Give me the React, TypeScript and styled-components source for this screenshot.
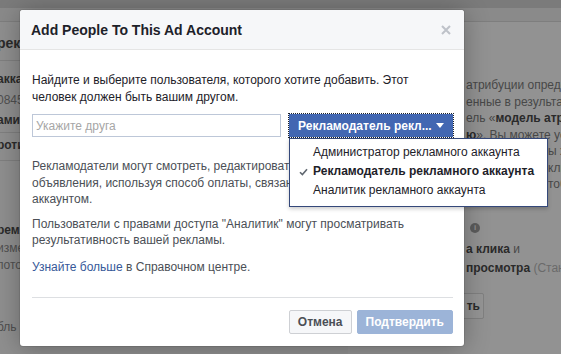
import styled, { createGlobalStyle } from "styled-components";

const GlobalStyle = createGlobalStyle`
  html, body {
    margin: 0;
    padding: 0;
  }
  body {
    font-family: "Liberation Sans", Arial, sans-serif;
    font-size: 12px;
    color: #1d2129;
  }
`;

const Screen = styled.div`
  position: relative;
  width: 561px;
  height: 354px;
  overflow: hidden;
  background: #929292;
`;

const TopBar = styled.div`
  height: 8px;
  background: #7b7b7b;
`;

const SubBar = styled.div`
  height: 13px;
  background: #8a8a8a;
  border-bottom: 1px solid #7e7e7e;
`;

const Page = styled.div`
  display: flex;
  height: 332px;
`;

const SideCol = styled.div`
  width: 348px;
  flex: none;
  overflow: hidden;
  display: flex;
  flex-direction: column;
  background: #8f8f8f;
`;

const SideLine = styled.div<{ $mt: number; $bold?: boolean; $big?: boolean }>`
  margin-top: ${(p) => p.$mt}px;
  margin-left: -3px;
  height: 16px;
  line-height: 16px;
  white-space: nowrap;
  font-size: ${(p) => (p.$big ? 14 : 12)}px;
  font-weight: ${(p) => (p.$bold ? "bold" : "normal")};
  color: ${(p) => (p.$bold ? "#2b2b2b" : "#4f4f4f")};
`;

const Rule = styled.div<{ $mt: number }>`
  margin-top: ${(p) => p.$mt}px;
  height: 1px;
  background: #7f7f7f;
`;

const MainCol = styled.div`
  flex: 1;
  overflow: hidden;
  padding-left: 118px;
  display: flex;
  flex-direction: column;
  color: #484848;
`;

const Copy = styled.div`
  margin-top: 55px;
  line-height: 16.5px;
  white-space: nowrap;
  b {
    color: #2a2a2a;
  }
`;

const CopyLine = styled.div<{ $indent?: number }>`
  padding-left: ${(p) => p.$indent ?? 0}px;
`;

const InfoDot = styled.div`
  margin: 30px 0 0 4px;
  width: 10px;
  height: 10px;
  border-radius: 50%;
  background: #5c5c5c;
  color: #929292;
  font-size: 8px;
  font-weight: bold;
  line-height: 10px;
  text-align: center;
`;

const Metrics = styled.div`
  margin-top: 7px;
  line-height: 19px;
  white-space: nowrap;
  b {
    color: #2a2a2a;
  }
  span {
    color: #6a6a6a;
  }
`;

const GhostButton = styled.div`
  margin: 15px 0 0 -40px;
  width: 58px;
  height: 26px;
  box-sizing: border-box;
  border: 1px solid #808080;
  border-radius: 2px;
  background: #959595;
  display: flex;
  align-items: center;
  justify-content: flex-end;
  padding-right: 3px;
  font-weight: bold;
  color: #2a2a2a;
`;

const Modal = styled.div`
  position: absolute;
  left: 20px;
  top: 10px;
  width: 444px;
  background: #fff;
  border-radius: 3px;
  box-shadow: 0 2px 26px rgba(0, 0, 0, 0.3), 0 0 0 1px rgba(0, 0, 0, 0.08);
`;

const Header = styled.div`
  height: 39px;
  border-bottom: 1px solid #e5e5e5;
  background: #f6f7f9;
  border-radius: 3px 3px 0 0;
  display: flex;
  align-items: center;
  justify-content: space-between;
  padding: 0 13px 0 11px;
`;

const Title = styled.div`
  font-size: 14px;
  font-weight: bold;
  color: #1d2129;
`;

const Body = styled.div`
  padding: 22px 11px 0 12px;
`;

const Text = styled.p<{ $mt?: number }>`
  margin: ${(p) => p.$mt ?? 0}px 0 0;
  line-height: 16.5px;
  color: #4b4f56;
  a {
    color: #365899;
    text-decoration: none;
  }
`;

const Lead = styled(Text)`
  color: #1d2129;
`;

const PickRow = styled.div`
  margin-top: 9px;
  display: flex;
  gap: 8px;
`;

const FriendInput = styled.input`
  width: 249px;
  height: 23px;
  box-sizing: border-box;
  border: 1px solid #bdc7d8;
  padding: 0 3px;
  font: inherit;
  color: #1d2129;
  outline: none;
  &::placeholder {
    color: #a6a6a6;
  }
`;

const RoleBox = styled.div`
  position: relative;
`;

const RoleButton = styled.button`
  width: 164px;
  height: 23px;
  box-sizing: border-box;
  border: 1px solid #4267b2;
  background: #4267b2;
  color: #fff;
  font: bold 12px "Liberation Sans", Arial, sans-serif;
  padding: 0 8px;
  display: flex;
  align-items: center;
  justify-content: space-between;
  outline: 1px dotted #1d2129;
  outline-offset: 0;
`;

const Caret = styled.span`
  width: 0;
  height: 0;
  border-left: 4px solid transparent;
  border-right: 4px solid transparent;
  border-top: 5px solid #fff;
`;

const Menu = styled.div`
  position: absolute;
  top: calc(100% + 1px);
  left: 0;
  width: 259px;
  box-sizing: border-box;
  padding: 4px 0 6px;
  background: #fff;
  border: 1px solid #34487a;
  box-shadow: 0 2px 4px rgba(0, 0, 0, 0.2);
  z-index: 2;
`;

const MenuItem = styled.div<{ $selected?: boolean }>`
  position: relative;
  height: 19px;
  line-height: 19px;
  padding-left: 23px;
  white-space: nowrap;
  color: #1d2129;
  font-weight: ${(p) => (p.$selected ? "bold" : "normal")};
`;

const Check = styled.svg`
  position: absolute;
  left: 9px;
  top: 6px;
`;

const Footer = styled.div`
  margin: 22px 11px 0 12px;
  border-top: 1px solid #dddfe2;
  padding: 12px 0;
  display: flex;
  justify-content: flex-end;
  gap: 5px;
`;

const Button = styled.button<{ $primary?: boolean }>`
  height: 24px;
  box-sizing: border-box;
  padding: 0 8px;
  border-radius: 2px;
  font: bold 12px "Liberation Sans", Arial, sans-serif;
  border: 1px solid ${(p) => (p.$primary ? "#9cb4d8" : "#ced0d4")};
  background: ${(p) => (p.$primary ? "#9cb4d8" : "#f6f7f9")};
  color: ${(p) => (p.$primary ? "#fff" : "#4b4f56")};
`;

export default function App() {
  return (
    <Screen>
      <GlobalStyle />
      <TopBar />
      <SubBar />
      <Page>
        <SideCol>
          <SideLine $mt={13} $bold $big>рекламного аккаунта</SideLine>
          <Rule $mt={9} />
          <SideLine $mt={10} $bold>аккаунт</SideLine>
          <SideLine $mt={5}>08451236</SideLine>
          <SideLine $mt={4} $bold>амика</SideLine>
          <Rule $mt={4} />
          <SideLine $mt={4} $bold>ротивник</SideLine>
          <Rule $mt={7} />
          <SideLine $mt={61} $bold>ремя</SideLine>
          <SideLine $mt={2}>измерения</SideLine>
          <SideLine $mt={1}>потому</SideLine>
          <SideLine $mt={46}>бль</SideLine>
        </SideCol>
        <MainCol>
          <Copy>
            <CopyLine>атрибуции определяет</CopyLine>
            <CopyLine>енные в результате</CopyLine>
            <CopyLine>
              ель «<b>модель атрибуции</b>
            </CopyLine>
            <CopyLine>
              <b>ю</b>». Вы можете установить
            </CopyLine>
            <CopyLine $indent={82}>ы хотите</CopyLine>
            <CopyLine $indent={82}>клика</CopyLine>
            <CopyLine $indent={82}>тобы</CopyLine>
          </Copy>
          <InfoDot>i</InfoDot>
          <Metrics>
            <div>
              <b>а клика</b> и
            </div>
            <div>
              <b>просмотра</b> <span>(Стандарт)</span>
            </div>
          </Metrics>
          <GhostButton>ть</GhostButton>
        </MainCol>
      </Page>

      <Modal>
        <Header>
          <Title>Add People To This Ad Account</Title>
          <svg width="10" height="10" viewBox="0 0 10 10">
            <path d="M1 1 L9 9 M9 1 L1 9" stroke="#bec2c9" strokeWidth="2" />
          </svg>
        </Header>
        <Body>
          <Lead>
            Найдите и выберите пользователя, которого хотите добавить. Этот
            человек должен быть вашим другом.
          </Lead>
          <PickRow>
            <FriendInput placeholder="Укажите друга" />
            <RoleBox>
              <RoleButton>
                Рекламодатель рекл...
                <Caret />
              </RoleButton>
              <Menu>
                <MenuItem>Администратор рекламного аккаунта</MenuItem>
                <MenuItem $selected>
                  <Check width="9" height="8" viewBox="0 0 9 8">
                    <path d="M1 4.2 L3.4 6.6 L8 1.2" fill="none" stroke="#606770" strokeWidth="1.6" />
                  </Check>
                  Рекламодатель рекламного аккаунта
                </MenuItem>
                <MenuItem>Аналитик рекламного аккаунта</MenuItem>
              </Menu>
            </RoleBox>
          </PickRow>
          <Text $mt={21}>
            Рекламодатели могут смотреть, редактировать и удалять рекламу,
            <br />
            объявления, используя способ оплаты, связанный с рекламным
            <br />
            аккаунтом.
          </Text>
          <Text $mt={8}>
            Пользователи с правами доступа "Аналитик" могут просматривать
            результативность вашей рекламы.
          </Text>
          <Text $mt={10}>
            <a href="#">Узнайте больше</a> в Справочном центре.
          </Text>
        </Body>
        <Footer>
          <Button>Отмена</Button>
          <Button $primary>Подтвердить</Button>
        </Footer>
      </Modal>
    </Screen>
  );
}
